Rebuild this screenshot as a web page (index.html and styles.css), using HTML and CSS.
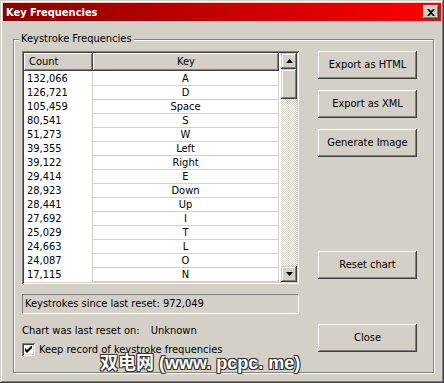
FILE: index.html
```html
<!DOCTYPE html>
<html lang="en">
<head>
  <meta charset="UTF-8">
  <title>Key Frequencies</title>
  <link rel="stylesheet" href="styles.css">
</head>
<body>
  <div class="window">
    <div class="titlebar">
      <span class="title">Key Frequencies</span>
      <div class="title-close">
        <svg width="8" height="7" viewBox="0 0 8 7"><path d="M0 0h2l2 2 2-2h2L5 3.5 8 7H6L4 5 2 7H0l3-3.5z" fill="#000"/></svg>
      </div>
    </div>

    <div class="window-body">
      <div class="group">
        <span class="group-label">Keystroke Frequencies</span>

        <div class="left-col">
          <div class="listview">
            <div class="list-main">
              <div class="list-header">
                <div class="hcell hcell-count">Count</div>
                <div class="hcell hcell-key">Key</div>
              </div>
              <div class="list-rows">
                <div class="row"><span class="c-count">132,066</span><span class="c-key">A</span></div>
                <div class="row"><span class="c-count">126,721</span><span class="c-key">D</span></div>
                <div class="row"><span class="c-count">105,459</span><span class="c-key">Space</span></div>
                <div class="row"><span class="c-count">80,541</span><span class="c-key">S</span></div>
                <div class="row"><span class="c-count">51,273</span><span class="c-key">W</span></div>
                <div class="row"><span class="c-count">39,355</span><span class="c-key">Left</span></div>
                <div class="row"><span class="c-count">39,122</span><span class="c-key">Right</span></div>
                <div class="row"><span class="c-count">29,414</span><span class="c-key">E</span></div>
                <div class="row"><span class="c-count">28,923</span><span class="c-key">Down</span></div>
                <div class="row"><span class="c-count">28,441</span><span class="c-key">Up</span></div>
                <div class="row"><span class="c-count">27,692</span><span class="c-key">I</span></div>
                <div class="row"><span class="c-count">25,029</span><span class="c-key">T</span></div>
                <div class="row"><span class="c-count">24,663</span><span class="c-key">L</span></div>
                <div class="row"><span class="c-count">24,087</span><span class="c-key">O</span></div>
                <div class="row"><span class="c-count">17,115</span><span class="c-key">N</span></div>
              </div>
            </div>
            <div class="scrollbar">
              <div class="sb-btn">
                <svg width="7" height="4" viewBox="0 0 7 4"><path d="M3.5 0L7 4H0z" fill="#000"/></svg>
              </div>
              <div class="sb-thumb"></div>
              <div class="sb-track"></div>
              <div class="sb-btn">
                <svg width="7" height="4" viewBox="0 0 7 4"><path d="M0 0h7L3.5 4z" fill="#000"/></svg>
              </div>
            </div>
          </div>

          <div class="status">Keystrokes since last reset: 972,049</div>

          <div class="reset-info">
            <span>Chart was last reset on:</span>
            <span class="reset-value">Unknown</span>
          </div>

          <label class="check">
            <span class="checkbox">
              <svg width="7" height="7" viewBox="0 0 7 7"><path d="M0 2l2 2 5-5v3L2 7 0 5z" fill="#000"/></svg>
            </span>
            Keep record of keystroke frequencies
          </label>
        </div>

        <div class="right-col">
          <div class="btn">Export as HTML</div>
          <div class="btn">Export as XML</div>
          <div class="btn">Generate Image</div>
          <div class="btn btn-reset">Reset chart</div>
          <div class="btn btn-close">Close</div>
        </div>
      </div>
    </div>

    <div class="watermark">双电网 (www. pcpc. me)</div>
  </div>
</body>
</html>
```

FILE: styles.css
```css
body {
  margin: 0;
  padding: 0;
  background-color: #d4d0c8;
  font-family: Tahoma, "DejaVu Sans Condensed", "Liberation Sans", sans-serif;
  font-size: 11px;
  color: #000;
}

.window {
  position: relative;
  width: 444px;
  height: 383px;
  box-sizing: border-box;
  padding: 3px;
  background-color: #d4d0c8;
  box-shadow: inset -1px -1px #404040, inset 1px 1px #d4d0c8,
              inset -2px -2px #808080, inset 2px 2px #fff;
}

/* title bar */
.titlebar {
  height: 18px;
  display: flex;
  align-items: center;
  justify-content: space-between;
  padding: 0 2px 0 3px;
  background: linear-gradient(to right, #8a0000, #ff0000);
}

.title {
  color: #fff;
  font-weight: bold;
  font-size: 11px;
}

.title-close {
  width: 16px;
  height: 14px;
  display: flex;
  align-items: center;
  justify-content: center;
  background-color: #d4d0c8;
  box-shadow: inset -1px -1px #404040, inset 1px 1px #fff,
              inset -2px -2px #808080;
}

/* body */
.window-body {
  padding: 18px 7px 7px 10px;
}

.group {
  position: relative;
  height: 334px;
  box-sizing: border-box;
  border: 1px solid #808080;
  box-shadow: inset 1px 1px #fff, 1px 1px #fff;
  padding: 11px 16px 0 8px;
  display: flex;
  gap: 19px;
}

.group-label {
  position: absolute;
  top: -8px;
  left: 5px;
  padding: 0 2px;
  background-color: #d4d0c8;
}

.left-col {
  width: 277px;
  display: flex;
  flex-direction: column;
}

/* list view */
.listview {
  height: 233px;
  box-sizing: border-box;
  padding: 2px;
  display: flex;
  background-color: #fff;
  box-shadow: inset 1px 1px #808080, inset -1px -1px #fff,
              inset 2px 2px #404040, inset -2px -2px #d4d0c8;
}

.list-main {
  width: 257px;
}

.list-header {
  display: flex;
  height: 19px;
}

.hcell {
  box-sizing: border-box;
  height: 18px;
  line-height: 17px;
  background-color: #d4d0c8;
  box-shadow: inset -1px -1px #404040, inset 1px 1px #fff,
              inset -2px -2px #808080;
}

.hcell-count {
  width: 69px;
  padding-left: 5px;
}

.hcell-key {
  width: 186px;
  text-align: center;
}

.row {
  display: grid;
  grid-template-columns: 68px 187px;
  height: 14px;
}

.c-count {
  padding-left: 3px;
  line-height: 14px;
}

.c-key {
  box-sizing: border-box;
  height: 14px;
  line-height: 13px;
  text-align: center;
  border-left: 1px solid #d4d0c8;
  border-right: 1px solid #d4d0c8;
  border-bottom: 1px solid #d4d0c8;
}

.scrollbar {
  width: 16px;
  display: flex;
  flex-direction: column;
}

.sb-btn {
  height: 16px;
  display: flex;
  align-items: center;
  justify-content: center;
  background-color: #d4d0c8;
  box-shadow: inset -1px -1px #404040, inset 1px 1px #d4d0c8,
              inset -2px -2px #808080, inset 2px 2px #fff;
}

.sb-thumb {
  height: 30px;
  background-color: #d4d0c8;
  box-shadow: inset -1px -1px #404040, inset 1px 1px #d4d0c8,
              inset -2px -2px #808080, inset 2px 2px #fff;
}

.sb-track {
  flex: 1;
  background: repeating-conic-gradient(#fff 0 25%, #d4d0c8 0 50%) 0 0 / 2px 2px;
}

/* status and info */
.status {
  margin-top: 10px;
  height: 20px;
  box-sizing: border-box;
  line-height: 18px;
  padding-left: 2px;
  border: 1px solid;
  border-color: #808080 #fff #fff #808080;
}

.reset-info {
  margin-top: 10px;
  height: 13px;
  line-height: 13px;
}

.reset-value {
  margin-left: 8px;
}

.check {
  margin-top: 6px;
  display: flex;
  align-items: center;
  gap: 4px;
}

.checkbox {
  width: 13px;
  height: 13px;
  box-sizing: border-box;
  display: flex;
  align-items: center;
  justify-content: center;
  background-color: #fff;
  box-shadow: inset 1px 1px #808080, inset -1px -1px #fff,
              inset 2px 2px #404040, inset -2px -2px #d4d0c8;
}

/* buttons */
.right-col {
  width: 99px;
  display: flex;
  flex-direction: column;
  gap: 11px;
}

.btn {
  height: 28px;
  line-height: 28px;
  text-align: center;
  background-color: #d4d0c8;
  box-shadow: inset -1px -1px #404040, inset 1px 1px #fff,
              inset -2px -2px #808080;
}

.btn-reset {
  margin-top: 83px;
}

.btn-close {
  margin-top: 34px;
}

/* site watermark over the screenshot */
.watermark {
  position: absolute;
  left: 100px;
  top: 348px;
  font-family: "Liberation Sans", "Noto Sans CJK SC", sans-serif;
  font-size: 18px;
  font-weight: bold;
  color: #fff;
  white-space: nowrap;
  text-shadow: 1px 1px 0 #333, -1px -1px 0 #333, 1px -1px 0 #333, -1px 1px 0 #333;
}
```
